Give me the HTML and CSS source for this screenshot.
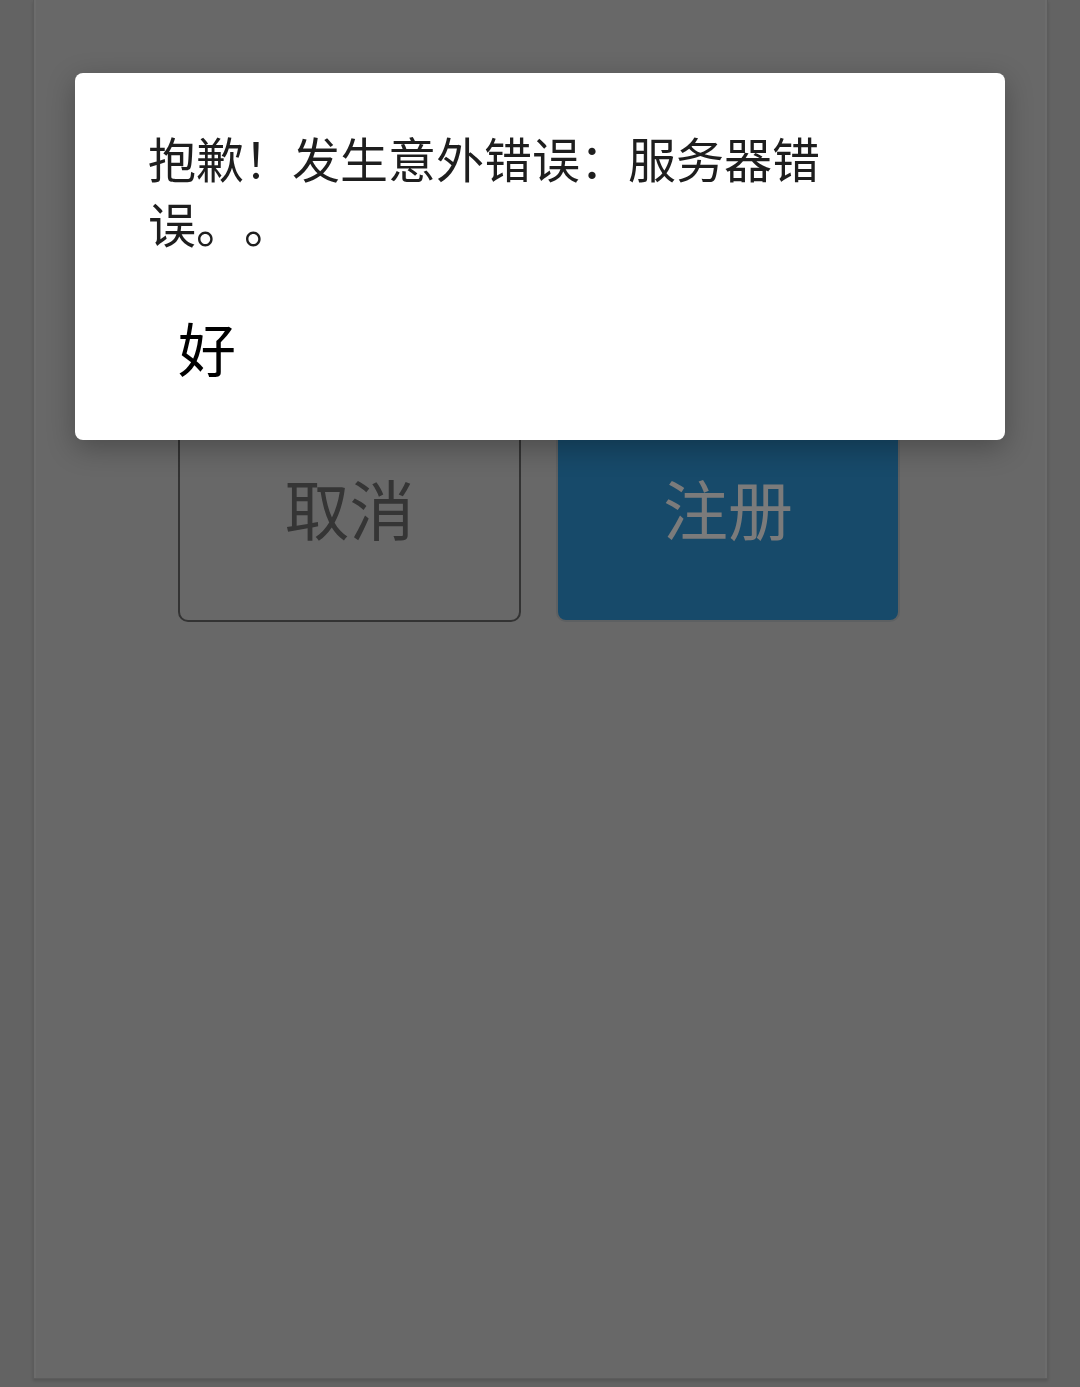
FILE: index.html
```html
<!DOCTYPE html>
<html lang="zh-CN">
<head>
<meta charset="utf-8">
<title>注册</title>
<link rel="stylesheet" href="styles.css">
</head>
<body>
<div class="page">
  <div class="card">
    <div class="actions">
      <button class="btn btn-cancel">取消</button>
      <button class="btn btn-primary">注册</button>
    </div>
  </div>
</div>
<div class="dialog" role="alertdialog">
  <p class="dialog-message">抱歉！发生意外错误：服务器错误。。</p>
  <div class="dialog-actions">
    <button class="dialog-btn">好</button>
  </div>
</div>
</body>
</html>
```
FILE: styles.css
```css
html, body {
  margin: 0;
  padding: 0;
  background: #636363;
  font-family: "Noto Sans CJK SC", "Noto Sans", sans-serif;
}

.page {
  padding: 0 32px 0 33px;
  height: 1387px;
  box-sizing: border-box;
}

.card {
  height: 1379px;
  box-sizing: border-box;
  background: #686868;
  border: 1px solid #5c5c5c;
  border-top: none;
  box-shadow: 0 2px 3px rgba(0, 0, 0, 0.15), inset 2px 0 0 #6c6c6c, inset -2px 0 0 #6c6c6c;
  padding-top: 402px;
}

.actions {
  display: flex;
  gap: 35px;
  padding-left: 144px;
}

.btn {
  width: 343px;
  height: 220px;
  box-sizing: border-box;
  border-radius: 10px;
  font-family: inherit;
  font-size: 65px;
  line-height: 1;
  display: flex;
  align-items: center;
  justify-content: center;
  padding: 0 0 10px;
}

.btn-cancel {
  background: transparent;
  border: 2px solid #333333;
  color: #353535;
}

.btn-primary {
  width: 344px;
  background: #174a6a;
  border: 2px solid #5d6062;
  color: #7b7b7b;
}

.dialog {
  position: fixed;
  left: 75px;
  top: 73px;
  width: 930px;
  height: 367px;
  box-sizing: border-box;
  background: #ffffff;
  border-radius: 8px;
  box-shadow: 0 8px 28px rgba(0, 0, 0, 0.28);
  padding: 52px 0 0 73px;
}

.dialog-message {
  margin: 0;
  width: 700px;
  font-size: 48px;
  line-height: 65px;
  color: #1e1e1e;
  text-spacing-trim: space-all;
}

.dialog-actions {
  padding-top: 63px;
  display: flex;
}

.dialog-btn {
  background: transparent;
  border: none;
  padding: 0 0 0 30px;
  font-family: inherit;
  font-size: 58px;
  line-height: 1;
  color: #000000;
}
```
